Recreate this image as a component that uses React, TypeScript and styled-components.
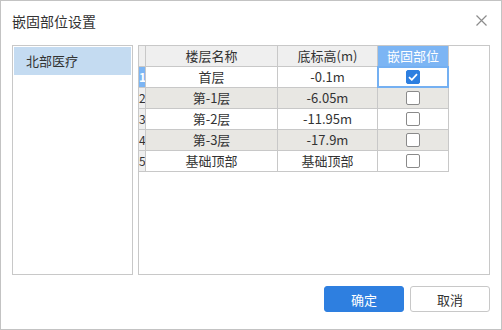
import React from 'react';
import styled, { createGlobalStyle } from 'styled-components';

const GlobalStyle = createGlobalStyle`
  html, body {
    margin: 0;
    padding: 0;
    background: #ffffff;
  }
  body {
    font-family: "Noto Sans CJK SC", "Liberation Sans", sans-serif;
    color: #333333;
  }
`;

const Dialog = styled.div`
  width: 502px;
  height: 330px;
  box-sizing: border-box;
  border: 1px solid #c3c3c3;
  background: #ffffff;
  display: flex;
  flex-direction: column;
`;

const Header = styled.div`
  height: 39px;
  display: flex;
  align-items: center;
  justify-content: space-between;
  padding: 0 11px 0 11px;
`;

const Title = styled.div`
  font-size: 14px;
  color: #333333;
  line-height: 20px;
`;

const CloseButton = styled.div`
  width: 14px;
  height: 14px;
  display: flex;
  align-items: center;
  justify-content: center;
  margin-right: 2px;
`;

const Body = styled.div`
  display: flex;
  gap: 5px;
  padding: 5px 11px 0 11px;
  height: 230px;
`;

const ProjectList = styled.div`
  width: 121px;
  box-sizing: border-box;
  border: 1px solid #c8c8c8;
  padding: 1px;
`;

const ProjectItem = styled.div<{ $active?: boolean }>`
  height: 28px;
  line-height: 28px;
  padding-left: 12px;
  font-size: 13px;
  color: #333333;
  background: ${(p) => (p.$active ? '#c4dbf1' : 'transparent')};
`;

const GridPanel = styled.div`
  flex: 1;
  box-sizing: border-box;
  border: 1px solid #c8c8c8;
`;

const Grid = styled.div`
  display: grid;
  grid-template-columns: 7px 132px 100px 71px;
  grid-auto-rows: 21px;
`;

const Cell = styled.div<{ $kind?: 'head' | 'even' | 'odd'; $hl?: boolean; $sel?: boolean }>`
  position: relative;
  box-sizing: border-box;
  border-right: 1px solid #c8c8c8;
  border-bottom: 1px solid #c8c8c8;
  display: flex;
  align-items: center;
  justify-content: center;
  font-size: 13px;
  line-height: 20px;
  white-space: nowrap;
  color: ${(p) => (p.$hl ? '#ffffff' : '#333333')};
  background: ${(p) =>
    p.$hl ? '#7cb5f4' : p.$kind === 'head' ? '#efefef' : p.$kind === 'even' ? '#e8e7e3' : '#ffffff'};
`;

const RowNum = styled(Cell)<{ $active?: boolean }>`
  justify-content: flex-start;
  font-size: 12px;
  padding-left: 0;
  overflow: hidden;
  background: ${(p) => (p.$active ? '#7cb5f4' : '#efefef')};
  color: ${(p) => (p.$active ? '#ffffff' : '#333333')};
  font-weight: ${(p) => (p.$active ? 700 : 400)};
`;

const SelectFrame = styled.div`
  position: absolute;
  left: -1px;
  top: -1px;
  right: -1px;
  bottom: -1px;
  border: 2px solid #74b0f2;
  pointer-events: none;
`;

const Box = styled.div<{ $checked?: boolean }>`
  width: 14px;
  height: 14px;
  box-sizing: border-box;
  border-radius: 2px;
  border: 1px solid ${(p) => (p.$checked ? '#2d7fe0' : '#8a8a8a')};
  background: ${(p) => (p.$checked ? '#2d7fe0' : '#ffffff')};
  display: flex;
  align-items: center;
  justify-content: center;
`;

const Footer = styled.div`
  display: flex;
  justify-content: flex-end;
  gap: 6px;
  padding: 11px 11px 0 0;
`;

const Button = styled.button<{ $primary?: boolean }>`
  width: 80px;
  height: 26px;
  box-sizing: border-box;
  border-radius: 3px;
  font-family: inherit;
  font-size: 13px;
  cursor: pointer;
  border: 1px solid ${(p) => (p.$primary ? '#2e7fe0' : '#c8c8c8')};
  background: ${(p) => (p.$primary ? '#2e7fe0' : '#ffffff')};
  color: ${(p) => (p.$primary ? '#ffffff' : '#333333')};
  padding: 0;
`;

const floors = [
  { name: '首层', height: '-0.1m', checked: true },
  { name: '第-1层', height: '-6.05m', checked: false },
  { name: '第-2层', height: '-11.95m', checked: false },
  { name: '第-3层', height: '-17.9m', checked: false },
  { name: '基础顶部', height: '基础顶部', checked: false },
];

const Check = ({ checked }: { checked: boolean }) => (
  <Box $checked={checked}>
    {checked && (
      <svg width="10" height="8" viewBox="0 0 10 8">
        <path d="M1 4.2 L3.8 6.8 L9 1.2" fill="none" stroke="#ffffff" strokeWidth="1.8" />
      </svg>
    )}
  </Box>
);

const App: React.FC = () => {
  return (
    <>
      <GlobalStyle />
      <Dialog>
        <Header>
          <Title>嵌固部位设置</Title>
          <CloseButton>
            <svg width="11" height="11" viewBox="0 0 11 11">
              <path d="M0.5 0.5 L10.5 10.5 M10.5 0.5 L0.5 10.5" stroke="#8c8c8c" strokeWidth="1.2" />
            </svg>
          </CloseButton>
        </Header>
        <Body>
          <ProjectList>
            <ProjectItem $active>北部医疗</ProjectItem>
          </ProjectList>
          <GridPanel>
            <Grid>
              <RowNum $kind="head" />
              <Cell $kind="head">楼层名称</Cell>
              <Cell $kind="head">底标高(m)</Cell>
              <Cell $kind="head" $hl>嵌固部位</Cell>
              {floors.map((f, i) => {
                const kind = i % 2 === 1 ? 'even' : 'odd';
                return (
                  <React.Fragment key={i}>
                    <RowNum $active={i === 0}>{i + 1}</RowNum>
                    <Cell $kind={kind}>{f.name}</Cell>
                    <Cell $kind={kind}>{f.height}</Cell>
                    <Cell $kind={kind}>
                      <Check checked={f.checked} />
                      {i === 0 && <SelectFrame />}
                    </Cell>
                  </React.Fragment>
                );
              })}
            </Grid>
          </GridPanel>
        </Body>
        <Footer>
          <Button $primary>确定</Button>
          <Button>取消</Button>
        </Footer>
      </Dialog>
    </>
  );
};

export default App;
